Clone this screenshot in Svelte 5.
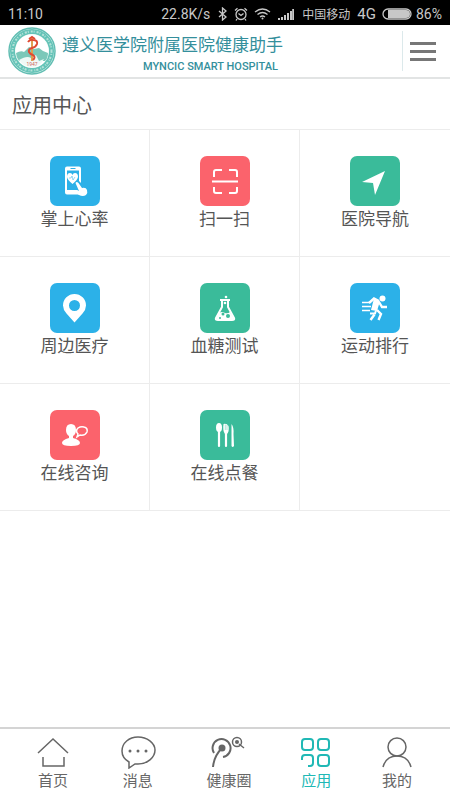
<script>
  const apps = [
    { name: '掌上心率', icon: 'heart', color: '#2cb1e8' },
    { name: '扫一扫', icon: 'scan', color: '#fb636c' },
    { name: '医院导航', icon: 'arrow', color: '#3abb9a' },
    { name: '周边医疗', icon: 'pin', color: '#2cb1e8' },
    { name: '血糖测试', icon: 'flask', color: '#3abb9a' },
    { name: '运动排行', icon: 'run', color: '#2cb1e8' },
    { name: '在线咨询', icon: 'consult', color: '#fb636c' },
    { name: '在线点餐', icon: 'meal', color: '#3abb9a' }
  ];
  const tabs = [
    { name: '首页', icon: 'home' },
    { name: '消息', icon: 'chat' },
    { name: '健康圈', icon: 'circle' },
    { name: '应用', icon: 'apps' },
    { name: '我的', icon: 'me' }
  ];
  let active = $state('应用');
</script>

<div class="page">
  <div class="status">
    <span class="time">11:10</span>
    <span>22.8K/s</span>
    <svg class="bt" width="9" height="14" viewBox="0 0 9 14"><path d="M1 4l7 6-3.500 3V1L8 4 1 10" /></svg>
    <svg class="alarm" width="14" height="14" viewBox="0 0 14 14"><circle cx="7" cy="7.500" r="5" /><path d="M4.500 6.500L7 8.500l2.500-2M1 3.500L3.500 1.200M13 3.500l-2.500-2.300M3 12l-1 1.500M11 12l1 1.500" /></svg>
    <svg class="wifi" width="17" height="13" viewBox="0 0 17 13"><path d="M1 5Q8.500-1 16 5M3.500 7.500q5-4 10 0M6 10q2.500-2 5 0" /><circle cx="8.500" cy="11.500" r="1" fill="#c8c8c8" stroke="none" /></svg>
    <svg class="signal" width="16" height="12" viewBox="0 0 16 12"><path d="M1 12v-2M4 12V9M7 12V7M10 12V5M13 12V3M15.200 12V1" /></svg>
    <span class="carrier">中国移动</span>
    <span class="net">4G</span>
    <svg class="battery" width="30" height="12" viewBox="0 0 30 12"><rect x="1" y="1" width="28" height="10" rx="5" /><path d="M6 2h18a4 4 0 0 1 0 8H6z" fill="#c8c8c8" stroke="none" /></svg>
    <span class="percent">86%</span>
  </div>

  <header>
    <svg class="logo" width="48" height="48" viewBox="0 0 48 48" aria-label="遵义医学院附属医院">
      <circle cx="24" cy="24" r="23" fill="#eefaf7" stroke="#61bdb2" stroke-width="1.500" />
      <circle cx="24" cy="24" r="19.500" fill="none" stroke="#64c3b7" stroke-width="5" />
      <circle cx="24" cy="24" r="19.500" fill="none" stroke="#b4e2d9" stroke-width="2" stroke-dasharray="2 1 1 2" />
      <circle cx="24" cy="24" r="16.500" fill="#fff" />
      <path d="M8 26q5-3 8-1l5-5 5 2 5-1 4 3 5 2q0 5-3 8H11q-3-4-3-8z" fill="#7bc8b9" />
      <path d="M11 33q8-5 12-2l5-3 3 6 5-2q-4 8-12 8-8 0-13-7z" fill="#eef9f6" />
      <path d="M24 10v24" stroke="#e0a050" stroke-width="2" />
      <path d="M20 15q2-3 5-2 5 0 4 4-1 3-5 4-4 1-3 4 1 2 4 3 3 2 0 5" fill="none" stroke="#df4932" stroke-width="2" />
      <path d="M21 12l3-2 3 2" stroke="#df4932" stroke-width="2" fill="none" />
      <text x="24" y="39" text-anchor="middle" font-size="5" fill="#cf665b">1947</text>
    </svg>
    <div class="brand">
      <div class="cn">遵义医学院附属医院健康助手</div>
      <div class="en">MYNCIC SMART HOSPITAL</div>
    </div>
    <button class="menu" aria-label="菜单"><i></i><i></i><i></i></button>
  </header>

  <main>
    <h1>应用中心</h1>
    <div class="grid">
      {#each apps as app}
        <a class="cell" href="#{app.icon}">
          <svg class="tile" style:background={app.color} width="50" height="50" viewBox="0 0 50 50">
            {#if app.icon === 'heart'}
              <path fill-rule="evenodd" d="M17 10.500h12q2 0 2 2V27l-2-2V14.500H17V34h10l3 4.500H17q-2 0-2-2v-24q0-2 2-2zm3.500 1.500v1h5v-1z" fill="#fff" />
              <path d="M22.500 28q-5-4-5.500-7 0-4 3-4 2 0 2.500 2 .5-2 2.500-2 3 0 3 4-.5 3-5.500 7z" fill="#fff" />
              <path d="M19 22h2l1-2 1 4 2-3" fill="none" stroke="#2cb1e8" stroke-width=".5" />
              <path d="M25.500 27q1-2 3 0l3.500 5q4-1 5 2 1 3-1 5-3 2-7 0l-4-3q-1-2 2-2l2 1z" fill="#fff" />
            {:else if app.icon === 'scan'}
              <path d="M14 21v-5q0-2 2-2h6M29 14h6q2 0 2 2v5M14 31v4q0 2 2 2h6M29 37h6q2 0 2-2v-4M12 25.500h26" fill="none" stroke="#fff" stroke-width="2" />
            {:else if app.icon === 'arrow'}
              <path d="M12 26l23-11-10 24-2-12z" fill="#fff" />
            {:else if app.icon === 'pin'}
              <path fill-rule="evenodd" d="M24.500 39.500l-8-9q-3.500-4-3.500-8a11.500 11.500 0 0 1 23 0q0 4-3.500 8zM24.500 17a5.500 5.500 0 1 0 0 11 5.500 5.500 0 0 0 0-11z" fill="#fff" />
            {:else if app.icon === 'flask'}
              <path d="M20 17h10M22 17v7l-6 11q-1 2 2 2h14q3 0 2-2l-6-11v-7" fill="none" stroke="#fff" stroke-width="2" />
              <path d="M19 30q3-2 6 0 3 1 5-1l4 7H16z" fill="#fff" />
              <circle cx="26" cy="14" r="1.300" fill="#fff" /><circle cx="25" cy="20" r="1.300" fill="#fff" />
              <circle cx="23" cy="31" r="1.500" fill="#3abb9a" /><circle cx="28" cy="33" r="2" fill="#3abb9a" /><circle cx="20" cy="35" r="1" fill="#3abb9a" />
            {:else if app.icon === 'run'}
              <circle cx="32.500" cy="15.500" r="3" fill="#fff" />
              <path d="M12 19.500h8M12 23.500h9M12 27.500h8" stroke="#fff" stroke-width="1.600" />
              <path d="M19 20l5-4.500 5 2.500M29 19l3 5h5M27 27l4 4-2.500 6M24.500 31.500L20.500 37" fill="none" stroke="#fff" stroke-width="2.400" />
              <path d="M24 15.500l6 2.500-3 10-6-1z" fill="#fff" />
              <path d="M20 30.500h5l1-3" fill="none" stroke="#fff" stroke-width="2" />
            {:else if app.icon === 'consult'}
              <path d="M16 20q0-6 5-6t5 6q0 4-3 6v2q7 2 7 5 0 3-9 3t-9-3q0-3 7-5v-2q-3-2-3-6z" fill="#fff" />
              <path d="M27 27l1-3q-3-3 0-6 3-2 6-1 4 1 3 5-2 4-7 3z" fill="none" stroke="#fff" stroke-width="1.500" />
            {:else}
              <ellipse cx="19" cy="17.500" rx="3" ry="4.500" fill="#fff" />
              <path d="M19 21v15M26 22v14" stroke="#fff" stroke-width="2.200" stroke-linecap="round" />
              <path d="M23.500 14q3-1 5 2 1 5-1.500 8h-2q-2.500-3-1.500-10z" fill="#fff" />
              <path d="M25.300 14.500V20M27 15v5" stroke="#3abb9a" stroke-width=".4" />
              <path d="M31.500 14q2.500 3 2 10l.5 12q-1.500 2-2.500 0z" fill="#fff" />
            {/if}
          </svg>
          <span>{app.name}</span>
        </a>
      {/each}
      <div class="cell"></div>
    </div>
  </main>

  <nav>
    {#each tabs as tab}
      <button class:active={active === tab.name} onclick={() => (active = tab.name)}>
        {#if tab.icon === 'home'}
          <svg width="32" height="34" viewBox="0 0 32 34"><path d="M1 18L16 4l15 14M6 22v9h21v-9" /></svg>
        {:else if tab.icon === 'chat'}
          <svg width="40" height="34" viewBox="-2 0 40 34"><path d="M9 27q-7-4-7-11C2 8 9 2 18 2s17 6 17 13-7 14-17 14h-3l-6 4z" /><circle class="dot" cx="10" cy="16" r="1.500" /><circle class="dot" cx="18" cy="16" r="1.500" /><circle class="dot" cx="26" cy="16" r="1.500" /></svg>
        {:else if tab.icon === 'circle'}
          <svg width="36" height="34" viewBox="2 0 36 34"><path stroke-width="2" d="M5 18a9 9 0 1 1 9 4M4 32q1-11 9-19" /><circle class="dot" cx="13" cy="13" r="3.500" /><circle cx="28" cy="7" r="4.500" /><circle class="dot" cx="28" cy="7" r="2" /><path d="M30 9l5 4" /></svg>
        {:else if tab.icon === 'apps'}
          <svg width="32" height="34" viewBox="0 0 32 34"><g stroke-width="2"><rect x="2" y="4" width="11" height="11" rx="3" /><rect x="18" y="4" width="11" height="11" rx="3" /><path d="M2 25v-2q0-3 3-3h5q3 0 3 3v5q0 3-3 3H8" /><rect x="18" y="20" width="11" height="11" rx="3" /></g></svg>
        {:else}
          <svg width="32" height="34" viewBox="0 0 32 34"><circle cx="16" cy="12" r="9" /><path d="M2 32q3-11 14-11t14 11" /></svg>
        {/if}
        <span>{tab.name}</span>
      </button>
    {/each}
  </nav>
</div>

<style>
  :global(body) { margin: 0; background: #fff; }
  .page { min-height: 100vh; display: flex; flex-direction: column; font-family: Roboto, "Noto Sans CJK SC", sans-serif; color: #555; }
  svg { display: block; flex: none; }
  .status { height: 25px; background: #000; color: #c8c8c8; display: flex; align-items: center; padding: 2px 8px 0; box-sizing: border-box; font-size: 14px; white-space: nowrap; }
  .status svg { fill: none; stroke: #c8c8c8; stroke-width: 1.3; }
  .time { flex: 1; }
  .bt { margin-left: 8px; }
  .alarm { margin-left: 7px; }
  .wifi { margin-left: 6px; }
  .status .signal { margin-left: 7px; stroke-width: 2; }
  .carrier { margin-left: 8px; font-size: 12px; }
  .net { margin-left: 7px; font-size: 15px; }
  .battery { margin-left: 6px; }
  .percent { margin-left: 4px; }
  header { height: 54px; box-sizing: border-box; border-bottom: 2px solid #e2e4e4; display: flex; align-items: center; padding-left: 8px; }
  .brand { margin-left: 6px; padding-top: 7px; color: #348f9c; text-align: right; white-space: nowrap; }
  .cn { font-size: 17px; line-height: 24px; }
  .en { font-size: 11px; line-height: 20px; padding-right: 5px; font-weight: 500; }
  .menu { margin-left: auto; width: 48px; height: 40px; padding: 0 14px 0 7px; border: 0; border-left: 1px solid #dce9eb; background: none; display: flex; flex-direction: column; justify-content: center; gap: 5px; }
  .menu i { display: block; width: 100%; height: 3px; background: #777; }
  main { flex: 1; }
  h1 { margin: 0; padding: 0 12px; height: 50px; line-height: 55px; font-size: 20px; font-weight: 400; }
  .grid { display: grid; grid-template-columns: repeat(3, 1fr); grid-auto-rows: 127px; border-top: 1px solid #ececec; }
  .cell { box-sizing: border-box; border-right: 1px solid #ececec; border-bottom: 1px solid #ececec; padding-top: 26px; display: flex; flex-direction: column; align-items: center; color: inherit; text-decoration: none; font-size: 17px; line-height: 26px; }
  .cell:nth-child(3n) { border-right: 0; }
  .tile { border-radius: 7px; }
  nav { height: 73px; box-sizing: border-box; border-top: 2px solid #d4d4d4; display: flex; justify-content: space-between; padding: 6px 37px 0; }
  nav button { border: 0; background: none; padding: 0; font: inherit; font-size: 15px; line-height: 20px; color: #666; display: flex; flex-direction: column; align-items: center; gap: 2px; }
  nav svg { fill: none; stroke: currentColor; stroke-width: 1.5; }
  nav .dot { fill: currentColor; stroke: none; }
  nav .active { color: #20b8b5; }
</style>
